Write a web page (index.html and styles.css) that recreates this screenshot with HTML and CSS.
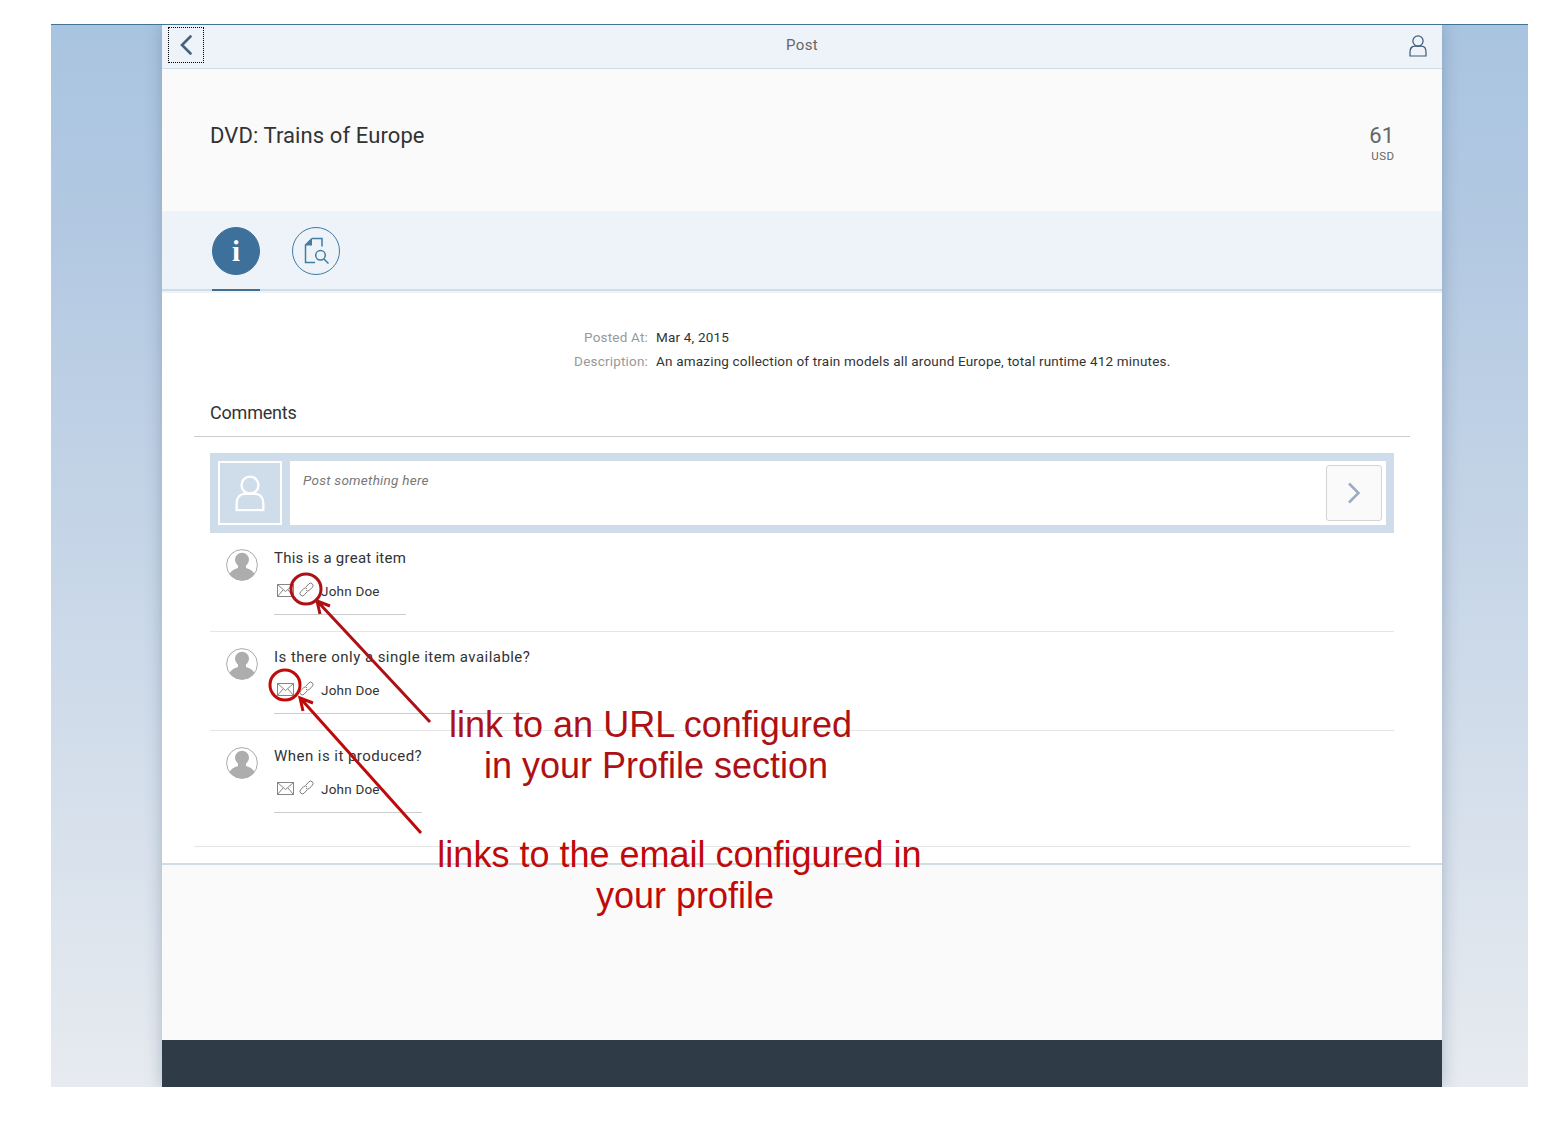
FILE: index.html
```html
<!DOCTYPE html>
<html lang="en">
<head>
<meta charset="utf-8">
<title>Post</title>
<link rel="stylesheet" href="styles.css">
</head>
<body>
<svg class="defs" width="0" height="0" aria-hidden="true">
  <symbol id="person" viewBox="0 0 18 22"><circle cx="9" cy="6" r="5.1"/><path d="M1 21V17C1 13.5 3 11.2 6 11.2H12C15 11.2 17 13.5 17 17V21Z"/></symbol>
  <symbol id="avatar" viewBox="0 0 32 32"><circle cx="16" cy="16" r="15.4" fill="#fff" stroke="#aaa"/><circle cx="16" cy="10.7" r="7" fill="#adadad"/><path d="M12 15H20V19C24 20 27 22 28.5 25A15.5 15.5 0 0 1 3.5 25C5 22 8 20 12 19Z" fill="#adadad"/></symbol>
  <symbol id="mail" viewBox="0 0 17 13"><path d="M.5.5H16.5V12.5H.5ZM.5.5L8.5 7.5L16.5.5M.5 12.5L6 6M16.5 12.5L11 6"/></symbol>
  <symbol id="link" viewBox="0 0 15 15"><g transform="rotate(-47 7.5 7.5)"><path d="M6.2 9.6H1.8A2.4 2.4 0 0 1 1.8 4.8H6.2A2.4 2.4 0 0 1 8.4 7.4"/><path d="M8.8 5.4H13.2A2.4 2.4 0 0 1 13.2 10.2H8.8A2.4 2.4 0 0 1 6.6 7.6"/></g></symbol>
</svg>
<div class="stage">
  <main class="app">
    <header class="bar">
      <button class="back" aria-label="Back"><svg width="12" height="20" viewBox="0 0 12 20"><path d="M10.5 1.5L2 10L10.5 18.5"/></svg></button>
      <h1 class="bar-title">Post</h1>
      <svg class="user" width="18" height="22"><use href="#person"/></svg>
    </header>
    <section class="object">
      <h2 class="object-title">DVD: Trains of Europe</h2>
      <div class="price"><div class="amount">61</div><div class="unit">USD</div></div>
    </section>
    <nav class="tabs">
      <div class="tab selected"><span class="disc">i</span></div>
      <div class="tab"><span class="disc"><svg width="26" height="28" viewBox="0 0 26 28"><path d="M8 1.5H18V9.5M8 1.5L1.5 8V25.5H11"/><path class="fold" d="M8 1V8.5H1Z"/><circle cx="16.5" cy="18.3" r="4.8"/><path d="M20 22L24.5 26.5"/></svg></span></div>
    </nav>
    <section class="content">
      <dl class="form">
        <dt>Posted At:</dt><dd>Mar 4, 2015</dd>
        <dt>Description:</dt><dd class="desc">An amazing collection of train models all around Europe, total runtime 412 minutes.</dd>
      </dl>
      <div class="comments">
        <h3 class="comments-title">Comments</h3>
        <div class="feed-input">
          <div class="picture"><svg width="30" height="37" viewBox="0 0 18 22"><use href="#person"/></svg></div>
          <div class="field"><span class="placeholder">Post something here</span>
            <button class="send" aria-label="Send"><svg width="14" height="22" viewBox="0 0 14 22"><path d="M2 1.5L11.5 11L2 20.5"/></svg></button></div>
        </div>
        <article class="comment"><svg class="avatar" width="32" height="32"><use href="#avatar"/></svg>
          <div class="body"><p class="text t1">This is a great item</p><div class="author"><svg width="17" height="13"><use href="#mail"/></svg><svg class="url" width="15" height="15"><use href="#link"/></svg><span>John Doe</span></div></div></article>
        <article class="comment"><svg class="avatar" width="32" height="32"><use href="#avatar"/></svg>
          <div class="body"><p class="text t2">Is there only a single item available?</p><div class="author"><svg width="17" height="13"><use href="#mail"/></svg><svg class="url" width="15" height="15"><use href="#link"/></svg><span>John Doe</span></div></div></article>
        <article class="comment"><svg class="avatar" width="32" height="32"><use href="#avatar"/></svg>
          <div class="body"><p class="text t3">When is it produced?</p><div class="author"><svg width="17" height="13"><use href="#mail"/></svg><svg class="url" width="15" height="15"><use href="#link"/></svg><span>John Doe</span></div></div></article>
      </div>
    </section>
    <footer class="footer"></footer>
  </main>
</div>
<svg class="marks" width="1568" height="1127" aria-hidden="true">
  <g stroke="#ad1015"><circle cx="306" cy="589" r="15"/><path d="M430 722L318 602M320 614L317 601L330 606"/></g>
  <g stroke="#c00a0a"><circle cx="285" cy="685" r="15"/><path d="M421 833L301 699M303 711L300 698L313 703"/></g>
</svg>
<p class="note note-url"><span>link to an URL configured</span><span class="second">in your Profile section</span></p>
<p class="note note-mail"><span>links to the email configured in</span><span class="second">your profile</span></p>
</body>
</html>
```
FILE: styles.css
```css
* { box-sizing: border-box; }
body { margin: 0; padding: 24px 40px 40px 51px; height: 1127px; overflow: hidden; background: #fff; color: #333; font-family: Roboto, "Liberation Sans", sans-serif; font-size: 13.5px; }
h1, h2, h3, p, dl, dd { margin: 0; font-weight: 400; }
svg { display: block; fill: none; }
button { padding: 0; background: none; }
.defs { position: absolute; }
.stage { height: 1063px; padding: 0 86px 0 111px; border-top: 1px solid #427393; background: linear-gradient(#a9c4e0, #b3c9e2 20%, #e7ebf0); overflow: hidden; }
.app { display: flex; flex-direction: column; height: 1062px; background: #fafafa; box-shadow: 0 0 16px rgba(60, 85, 115, .33); }
.bar { display: grid; grid-template-columns: 36px 1fr 36px; align-items: center; height: 44px; padding: 0 6px 3px; background: #edf3f8; border-bottom: 1px solid #cddde8; }
.back { display: flex; align-items: center; justify-content: center; width: 36px; height: 36px; border: 1px dotted #000; }
.back svg { stroke: #45637f; stroke-width: 2.6; stroke-linecap: round; }
.bar-title { text-align: center; font-size: 15px; letter-spacing: .4px; color: #666; }
.user { justify-self: center; margin-top: 2px; stroke: #3d5878; stroke-width: 1.2; }
.object { display: flex; justify-content: space-between; height: 142px; padding: 52px 48px 0; }
.object-title { font-size: 22px; line-height: 30px; letter-spacing: .1px; }
.price { text-align: right; color: #666; }
.amount { font-size: 22px; line-height: 30px; }
.unit { font-size: 11.5px; line-height: 11px; letter-spacing: .4px; margin-right: -.4px; }
.tabs { display: flex; gap: 32px; height: 80px; padding: 16px 50px 0; background: #edf3f8; border-bottom: 2px solid #cfdcea; }
.tab { height: 64px; }
.tab.selected { border-bottom: 2px solid #466d8d; }
.disc { display: flex; align-items: center; justify-content: center; width: 48px; height: 48px; border: 1px solid #427ca1; border-radius: 50%; }
.disc svg { margin-left: 2px; stroke: #427ca1; stroke-width: 1.5; }
.disc .fold { fill: #427ca1; stroke: none; }
.selected .disc { background: #3d709a; border-color: #3d709a; color: #fff; font: bold 29px "Liberation Serif", serif; }
.content { height: 574px; padding: 32px 32px 0; background: #fff; border-top: 2px solid #edf3f8; border-bottom: 2px solid #d0dde3; }
.form { display: grid; grid-template-columns: 454px 1fr; column-gap: 8px; line-height: 24px; letter-spacing: .19px; }
.form dt { text-align: right; color: #999; }
.comments { height: 457px; margin-top: 17px; border-bottom: 1px solid #e5e5e5; display: flow-root; }
.comments-title { height: 47px; padding: 0 16px; line-height: 46px; font-size: 18px; letter-spacing: -.2px; border-bottom: 1px solid #ccc; }
.feed-input { display: flex; gap: 8px; height: 80px; margin: 16px 16px 0; padding: 8px; background: #cfdce9; }
.picture { display: flex; align-items: center; justify-content: center; width: 64px; border: 2px solid #fff; }
.picture svg { stroke: #fff; stroke-width: 1.4; }
.field { flex: 1; display: flex; justify-content: space-between; padding: 4px 4px 4px 13px; background: #fff; }
.placeholder { padding-top: 7px; line-height: 16px; font-style: italic; color: #777; letter-spacing: .27px; }
.send { display: flex; align-items: center; justify-content: center; width: 56px; height: 56px; border: 1px solid #d4d4d4; border-radius: 3px; background: #fafafa; }
.send svg { stroke: #9aacc0; stroke-width: 2.5; }
.comment { display: flex; align-items: flex-start; gap: 16px; height: 99px; margin: 0 16px; padding: 16px 16px 0; border-bottom: 1px solid #e5e5e5; }
.comment:last-child { border-bottom: 0; }
.body { height: 66px; border-bottom: 1px solid #ccc; }
.text { font-size: 15px; line-height: 18px; white-space: nowrap; }
.t1 { letter-spacing: .25px; }
.t2 { letter-spacing: .45px; }
.t3 { letter-spacing: .46px; }
.author { display: flex; align-items: center; height: 20px; margin-top: 13px; padding-left: 3px; letter-spacing: .2px; }
.author svg { stroke: #777; stroke-width: .9; overflow: visible; }
.author .url { margin: 0 7px 2px 5px; }
.author span { padding-top: 2px; }
.footer { margin-top: auto; height: 47px; background: #2f3c48; }
.marks { position: absolute; left: 0; top: 0; stroke-width: 3; }
.note { position: absolute; font: 36px/41px "Liberation Sans", Arial, sans-serif; text-align: center; white-space: nowrap; }
.note span { display: block; }
.note .second { padding-left: 11px; }
.note-url { left: 446px; top: 704px; width: 409px; color: #ad1015; }
.note-mail { left: 434px; top: 834px; width: 491px; color: #c00a0a; }
```
